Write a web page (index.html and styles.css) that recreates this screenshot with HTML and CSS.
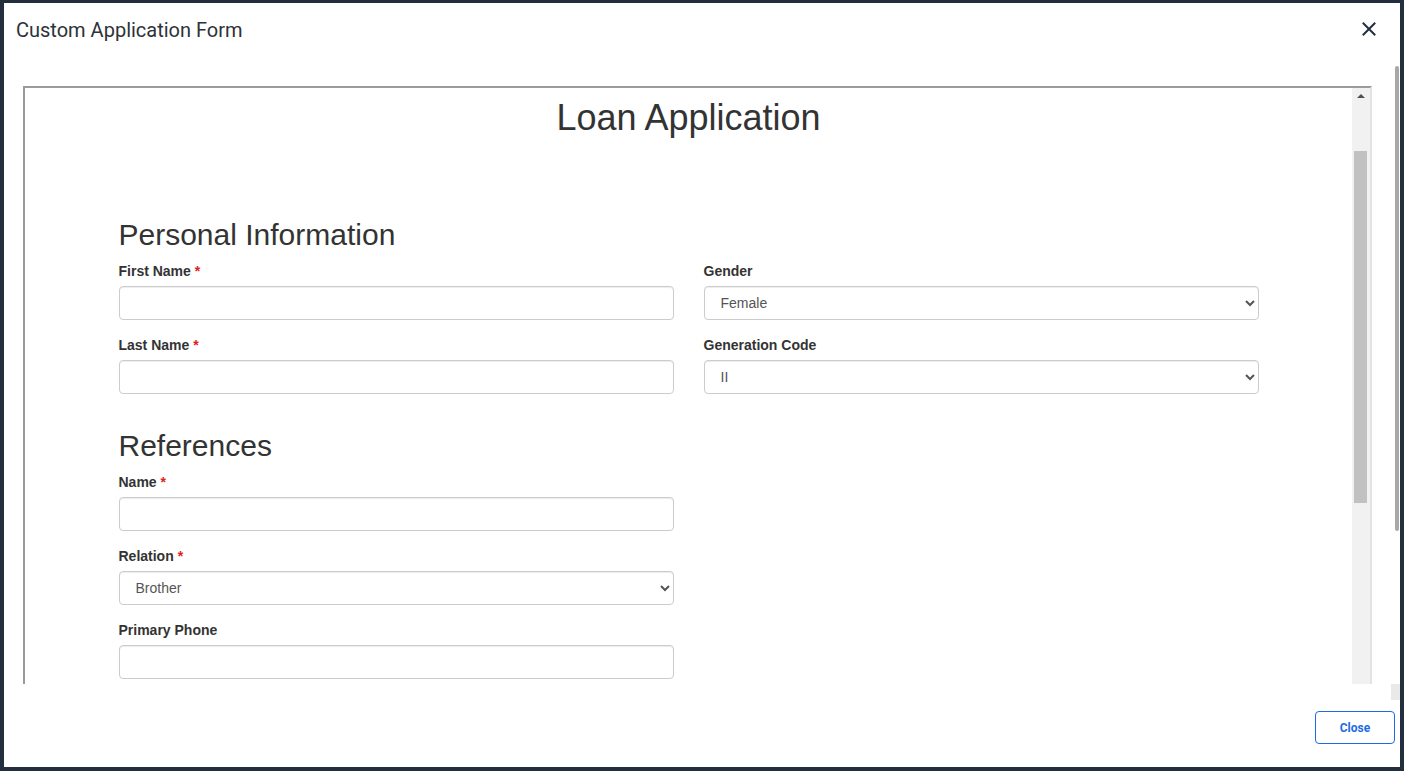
FILE: index.html
```html
<!DOCTYPE html>
<html lang="en">
<head>
<meta charset="utf-8">
<title>Custom Application Form</title>
<link rel="stylesheet" href="styles.css">
</head>
<body>
<div class="modal">
  <header class="modal-header">
    <h4 class="modal-title">Custom Application Form</h4>
    <button class="modal-close" aria-label="Close">
      <svg width="14" height="14" viewBox="0 0 14 14"><path d="M1.5 1.5 L12.5 12.5 M12.5 1.5 L1.5 12.5" stroke="#232f3e" stroke-width="2" fill="none" stroke-linecap="square"/></svg>
    </button>
  </header>
  <div class="modal-body">
    <div class="body-main">
      <div class="viewport">
        <div class="frame">
          <div class="frame-content">
            <h1 class="page-title">Loan Application</h1>
            <div class="container">
              <div class="row">
                <div class="col">
                  <h2 class="section-title">Personal Information</h2>
                  <div class="form-group">
                    <label>First Name <span class="req">*</span></label>
                    <input class="form-control" type="text">
                  </div>
                  <div class="form-group">
                    <label>Last Name <span class="req">*</span></label>
                    <input class="form-control" type="text">
                  </div>
                </div>
                <div class="col col-offset">
                  <div class="form-group">
                    <label>Gender</label>
                    <select class="form-control"><option>Female</option><option>Male</option></select>
                  </div>
                  <div class="form-group">
                    <label>Generation Code</label>
                    <select class="form-control"><option>II</option><option>III</option><option>Jr.</option><option>Sr.</option></select>
                  </div>
                </div>
              </div>
              <div class="row">
                <div class="col">
                  <h2 class="section-title">References</h2>
                  <div class="form-group">
                    <label>Name <span class="req">*</span></label>
                    <input class="form-control" type="text">
                  </div>
                  <div class="form-group">
                    <label>Relation <span class="req">*</span></label>
                    <select class="form-control"><option>Brother</option><option>Sister</option></select>
                  </div>
                  <div class="form-group">
                    <label>Primary Phone</label>
                    <input class="form-control" type="text">
                  </div>
                </div>
                <div class="col"></div>
              </div>
            </div>
          </div>
          <div class="frame-scrollbar">
            <div class="scroll-up"></div>
            <div class="scroll-thumb"></div>
          </div>
        </div>
      </div>
      <div class="outer-vscroll"><div class="outer-thumb"></div></div>
    </div>
    <div class="body-hscroll"><div class="corner"></div></div>
  </div>
  <footer class="modal-footer">
    <button class="btn-close">Close</button>
  </footer>
</div>
</body>
</html>
```

FILE: styles.css
```css
html, body {
  margin: 0;
  padding: 0;
}
body {
  background: #232f3e;
  padding: 3px 4px 4px 4px;
  height: 771px;
  box-sizing: border-box;
  overflow: hidden;
}
.modal {
  background: #fff;
  width: 1396px;
  height: 764px;
  display: flex;
  flex-direction: column;
  font-family: Roboto, "Liberation Sans", sans-serif;
}
.modal-header {
  height: 57px;
  flex: none;
  display: flex;
  align-items: center;
  justify-content: space-between;
  padding: 0 24px 3px 12px;
  box-sizing: border-box;
}
.modal-title {
  margin: 0;
  font-size: 20px;
  line-height: 24px;
  font-weight: 400;
  color: #2e3238;
}
.modal-close {
  background: none;
  border: 0;
  padding: 0;
  width: 14px;
  height: 14px;
  display: flex;
  cursor: pointer;
  position: relative;
  top: -1px;
}
.modal-body {
  flex: none;
  height: 640px;
  display: flex;
  flex-direction: column;
}
.body-main {
  height: 624px;
  display: flex;
}
.viewport {
  width: 1386px;
  overflow: hidden;
  padding: 26px 0 0 19px;
  box-sizing: border-box;
}
.frame {
  width: 1349px;
  height: 900px;
  box-sizing: border-box;
  border-style: solid;
  border-width: 2px;
  border-color: #9b9b9b #e3e3e3 #e3e3e3 #9b9b9b;
  display: flex;
  font-family: "Liberation Sans", Arial, Helvetica, sans-serif;
  font-size: 14px;
  line-height: 20px;
  color: #333;
}
.frame-content {
  flex: 1;
  padding-top: 10px;
}
.page-title {
  margin: 0;
  font-size: 36px;
  line-height: 40px;
  font-weight: 400;
  text-align: center;
  color: #333;
}
.container {
  width: 1140px;
  margin: 0 auto;
}
.row {
  display: grid;
  grid-template-columns: 555px 555px;
  column-gap: 30px;
}
.section-title {
  margin: 20px 0 10px;
  font-size: 30px;
  line-height: 33px;
  font-weight: 400;
  color: #333;
}
.row:first-child .col:first-child .section-title {
  margin-top: 80px;
}
.row:first-child .col-offset {
  padding-top: 123px;
}
.form-group {
  margin-bottom: 15px;
}
label {
  display: block;
  font-weight: 700;
  margin-bottom: 5px;
}
.req {
  color: #e0201a;
}
.form-control {
  display: block;
  width: 100%;
  height: 34px;
  box-sizing: border-box;
  padding: 6px 12px;
  font-family: "Liberation Sans", Arial, sans-serif;
  font-size: 14px;
  color: #555;
  background: #fff;
  border: 1px solid #ccc;
  border-radius: 4px;
  box-shadow: inset 0 1px 1px rgba(0,0,0,.075);
  margin: 0;
}
.frame-scrollbar {
  width: 18px;
  flex: none;
  background: #f1f1f1;
  display: flex;
  flex-direction: column;
}
.scroll-up {
  height: 17px;
  display: flex;
  justify-content: center;
  padding-top: 6px;
  box-sizing: border-box;
}
.scroll-up::before {
  content: "";
  width: 0;
  height: 0;
  border-left: 4px solid transparent;
  border-right: 4px solid transparent;
  border-bottom: 4px solid #505050;
}
.scroll-thumb {
  margin: 46px 3px 0 2px;
  height: 352px;
  background: #c1c1c1;
}
.outer-vscroll {
  width: 10px;
  flex: none;
}
.outer-thumb {
  margin: 6px 0 0 5px;
  width: 4px;
  height: 465px;
  background: #a8a8a8;
  border-radius: 2px;
}
.body-hscroll {
  height: 16px;
  display: flex;
  justify-content: flex-end;
}
.corner {
  width: 9px;
  height: 16px;
  background: #e9e9e9;
}
.modal-footer {
  flex: 1;
  display: flex;
  justify-content: flex-end;
  align-items: flex-start;
  padding: 11px 5px 0 0;
}
.btn-close {
  width: 80px;
  height: 33px;
  background: #fff;
  border: 1px solid #1d6ae5;
  border-radius: 4px;
  color: #1d6ae5;
  font-family: Roboto, "Liberation Sans", sans-serif;
  font-weight: 700;
  font-size: 12px;
  cursor: pointer;
}
```
